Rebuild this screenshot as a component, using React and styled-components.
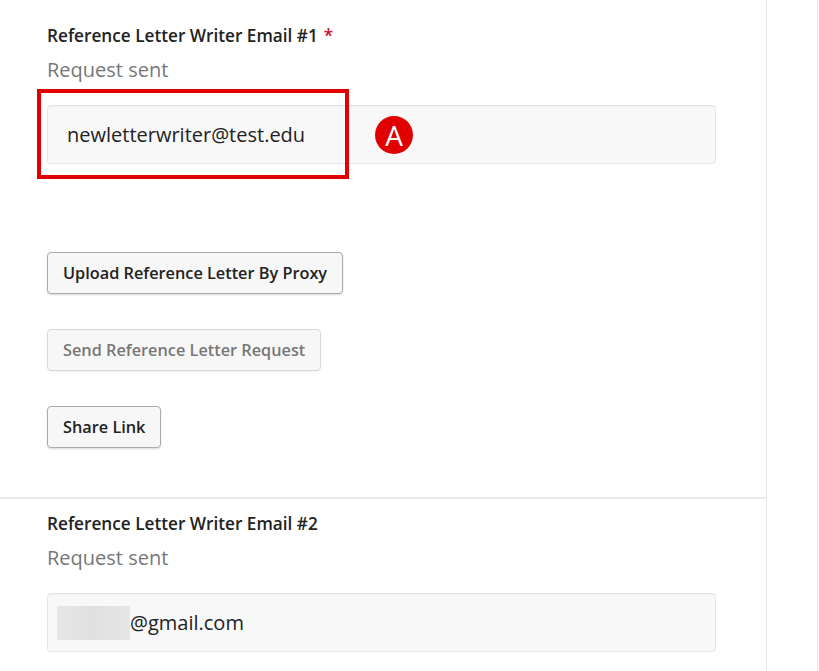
import React from "react";
import styled, { createGlobalStyle } from "styled-components";

const Global = createGlobalStyle`
  html, body { margin: 0; padding: 0; background: #fff; }
  body { font-family: "Open Sans", "Noto Sans", sans-serif; color: #222; }
`;

const Page = styled.div`
  display: flex;
  height: 671px;
  overflow: hidden;
`;

const Main = styled.main`
  width: 766px;
  flex: none;
  border-right: 1px solid #e6e6e6;
`;

const Side = styled.aside`
  width: 50px;
  flex: none;
  border-right: 1px solid #e6e6e6;
`;

const Section = styled.section`
  padding: ${(p) => (p.$first ? "24px 50px 49px 47px" : "13px 50px 0 47px")};
  border-bottom: ${(p) => (p.$first ? "2px solid #e8e8e8" : "none")};
`;

const Label = styled.div`
  font-size: 17.2px;
  font-weight: 600;
  line-height: 24px;
  color: #222;
`;

const Required = styled.span`
  color: #c8102e;
  margin-left: 6px;
`;

const Status = styled.div`
  font-size: 20px;
  line-height: 26px;
  color: #777;
  margin-top: 9px;
`;

const Field = styled.div`
  position: relative;
  margin-top: 22px;
`;

const Input = styled.div`
  box-sizing: border-box;
  height: 59px;
  border: 1px solid #e8e8e8;
  border-top-color: #e2e2e2;
  border-radius: 4px;
  background: #f8f8f8;
  box-shadow: inset 0 1px 1px rgba(0, 0, 0, 0.03);
  display: flex;
  align-items: center;
  padding-left: ${(p) => p.$pad || "19px"};
  font-size: 20px;
  color: #222;
`;

const Redacted = styled.span`
  display: inline-block;
  width: 73px;
  height: 34px;
  background: linear-gradient(90deg, #e6e6e6, #e0e0e0 50%, #e6e6e6);
`;

const Highlight = styled.div`
  position: absolute;
  left: -10px;
  top: -16px;
  box-sizing: border-box;
  width: 312px;
  height: 90px;
  border: 4.5px solid #e10000;
  pointer-events: none;
`;

const Badge = styled.div`
  position: absolute;
  left: 328px;
  top: 11px;
  width: 38px;
  height: 38px;
  border-radius: 50%;
  background: #e10000;
  color: #fff;
  display: flex;
  align-items: center;
  justify-content: center;
  font-size: 28px;
  line-height: 1;
`;

const Actions = styled.div`
  display: flex;
  flex-direction: column;
  align-items: flex-start;
  gap: 35px;
  margin-top: 88px;
`;

const Button = styled.button`
  box-sizing: border-box;
  height: 42px;
  padding: 0 15px;
  font-family: inherit;
  font-size: 16.3px;
  font-weight: 600;
  color: ${(p) => (p.disabled ? "#777" : "#222")};
  background: #f7f7f7;
  border: 1px solid ${(p) => (p.disabled ? "#d8d8d8" : "#aaa")};
  border-radius: 4px;
  box-shadow: ${(p) => (p.disabled ? "0 1px 1px rgba(0,0,0,0.05)" : "0 1px 2px rgba(0,0,0,0.15)")};
  cursor: ${(p) => (p.disabled ? "default" : "pointer")};
`;

export default function App() {
  return (
    <>
      <Global />
      <Page>
        <Main>
          <Section $first>
            <Label>
              Reference Letter Writer Email #1<Required>*</Required>
            </Label>
            <Status>Request sent</Status>
            <Field>
              <Input>newletterwriter@test.edu</Input>
              <Highlight />
              <Badge>A</Badge>
            </Field>
            <Actions>
              <Button>Upload Reference Letter By Proxy</Button>
              <Button disabled>Send Reference Letter Request</Button>
              <Button>Share Link</Button>
            </Actions>
          </Section>
          <Section>
            <Label>Reference Letter Writer Email #2</Label>
            <Status>Request sent</Status>
            <Field>
              <Input $pad="9px">
                <Redacted />
                @gmail.com
              </Input>
            </Field>
          </Section>
        </Main>
        <Side />
      </Page>
    </>
  );
}
